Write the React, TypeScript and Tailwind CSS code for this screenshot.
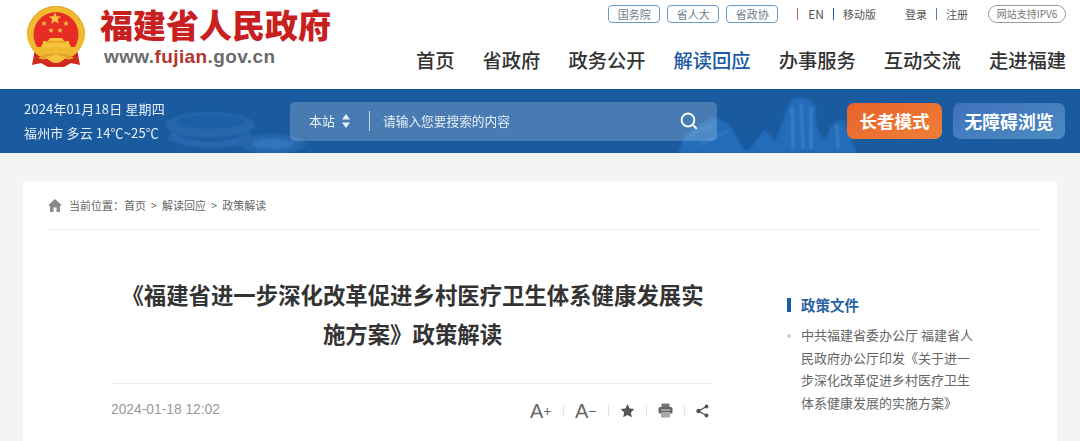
import React from "react";

function starPath(cx: number, cy: number, r: number) {
  const pts: string[] = [];
  for (let i = 0; i < 10; i++) {
    const rad = i % 2 === 0 ? r : r * 0.42;
    const a = -Math.PI / 2 + (i * Math.PI) / 5;
    pts.push(`${(cx + rad * Math.cos(a)).toFixed(2)},${(cy + rad * Math.sin(a)).toFixed(2)}`);
  }
  return `M${pts.join(" L")} Z`;
}

function Emblem() {
  return (
    <svg width="60" height="63" viewBox="0 0 60 63">
      <path d="M9 44 L6 60 L15 58 L22 62 L38 62 L45 58 L54 60 L51 44 Z" fill="#cf2a20" />
      <path d="M30 1 A29 28.5 0 0 1 59 29 C59 38 54 46 47 51 L13 51 C6 46 1 38 1 29 A29 28.5 0 0 1 30 1 Z" fill="#f0bb31" />
      <path d="M30 1.5 A28.5 28 0 0 1 58.5 29" fill="none" stroke="#e3a62a" strokeWidth="1" />
      <path d="M30 1.5 A28.5 28 0 0 0 1.5 29" fill="none" stroke="#e3a62a" strokeWidth="1" />
      <path d="M30 7 A22.5 22.5 0 0 1 52.5 29 C52.5 34 51 38 49 42 L11 42 C9 38 7.5 34 7.5 29 A22.5 22.5 0 0 1 30 7 Z" fill="#e62c24" />
      <path d="M24 33 L36 33 L38 36 L43 36 L43 38 L45 42 L15 42 L17 38 L17 36 L22 36 Z" fill="#f6c53c" />
      <path d="M19 36 H41 V37.5 H19 Z" fill="#e5a126" />
      <path d="M30 48 C24 54 18 56 12 53 L18 49 Z" fill="#e3a62a" />
      <path d="M30 48 C36 54 42 56 48 53 L42 49 Z" fill="#e3a62a" />
      <path d="M20 52 C26 60 34 60 40 52 L30 50 Z" fill="#f4c33b" />
      <path d={starPath(29, 13.5, 6.6)} fill="#f6c53c" />
      <path d={starPath(18, 18.5, 3)} fill="#f6c53c" />
      <path d={starPath(40, 18.5, 3)} fill="#f6c53c" />
      <path d={starPath(25, 25.5, 3)} fill="#f6c53c" />
      <path d={starPath(34, 25.5, 3)} fill="#f6c53c" />
    </svg>
  );
}

function Pill({ children }: { children: React.ReactNode }) {
  return (
    <span className="flex h-[18px] w-[52px] items-center justify-center rounded-[4px] border border-[#6a9bcb] text-[11px] leading-none text-[#6f7c8a]">
      {children}
    </span>
  );
}

function Sep({ className }: { className: string }) {
  return <span className={`block h-[12px] w-px ${className}`} />;
}

function Header() {
  const nav = ["首页", "省政府", "政务公开", "解读回应", "办事服务", "互动交流", "走进福建"];
  return (
    <header className="flex h-[89px] bg-white pl-[26px] pr-[14px]">
      <div className="mt-[5px]">
        <Emblem />
      </div>
      <div className="ml-[14px] mt-[9px] flex flex-col">
        <span className="whitespace-nowrap font-['Liberation_Sans','Noto_Sans_CJK_SC',sans-serif] text-[33px] font-black leading-[36px] text-[#c8201f]">福建省人民政府</span>
        <span className="ml-[4px] mt-[1px] font-['Liberation_Sans',sans-serif] text-[19px] font-bold leading-[22px] tracking-[0.4px] text-[#6b6b6b]">
          www.<span className="text-[#b5322d]">fujian</span>.gov.cn
        </span>
      </div>
      <div className="ml-auto flex flex-col items-end">
        <div className="mt-[5px] flex h-[18px] items-center">
          <div className="flex gap-[7px]">
            <Pill>国务院</Pill>
            <Pill>省人大</Pill>
            <Pill>省政协</Pill>
          </div>
          <Sep className="ml-[19px] bg-[#c0605a]" />
          <span className="ml-[10px] text-[12px] text-[#555]">EN</span>
          <Sep className="ml-[9px] bg-[#1f5ea5]" />
          <span className="ml-[9px] text-[11px] text-[#555]">移动版</span>
          <span className="ml-[29px] text-[11px] text-[#555]">登录</span>
          <Sep className="ml-[9px] bg-[#5a7fa5]" />
          <span className="ml-[9px] text-[11px] text-[#555]">注册</span>
          <span className="ml-[20px] flex h-[18px] w-[78px] items-center justify-center rounded-full border border-[#9a9a9a] text-[10px] leading-none text-[#777]">
            网站支持IPV6
          </span>
        </div>
        <nav className="mt-[23px] flex gap-[28px]">
          {nav.map((n) => (
            <span key={n} className={`text-[19.3px] font-medium leading-[28px] ${n === "解读回应" ? "text-[#1a5ba3]" : "text-[#333]"}`}>
              {n}
            </span>
          ))}
        </nav>
      </div>
    </header>
  );
}

function Scenery() {
  return (
    <svg className="absolute inset-0 h-full w-full" viewBox="0 0 1080 64" preserveAspectRatio="none">
      <defs>
        <filter id="b" x="-10%" y="-10%" width="120%" height="120%">
          <feGaussianBlur stdDeviation="0.8" />
        </filter>
      </defs>
      <g filter="url(#b)">
        <ellipse cx="210" cy="36" rx="45" ry="13" fill="#2766ab" />
        <ellipse cx="210" cy="33" rx="34" ry="7" fill="#1d5fa6" />
        <path d="M172 42 C190 56 230 56 250 42 L252 52 C230 62 190 62 168 50 Z" fill="#2a6cb3" opacity="0.8" />
        <ellipse cx="273" cy="55" rx="33" ry="10" fill="#2766ab" />
        <ellipse cx="273" cy="55" rx="21" ry="5" fill="#3175bc" />
        <path d="M678 64 L684 48 L694 38 L702 34 L712 28 L722 31 L730 36 L736 46 L742 58 L748 62 L756 52 L764 41 L770 46 L775 52 L780 40 L786 22 L790 12 L800 8 L810 11 L816 18 L816 34 L820 46 L826 50 L830 38 L836 32 L844 31 L848 40 L852 54 L858 64 Z" fill="#226fbd" opacity="0.9" />
        <path d="M792 18 L793 60 M801 14 L803 60 M811 18 L811 60 M837 36 L838 60" stroke="#4b8fd3" strokeWidth="2" opacity="0.75" fill="none" />
        <path d="M690 46 L712 36 M700 56 L728 42" stroke="#3b84cf" strokeWidth="2" opacity="0.6" />
      </g>
    </svg>
  );
}

function SearchBar() {
  return (
    <section className="relative flex h-[64px] items-center overflow-hidden bg-[#1a5a9f] pl-[24px] pr-[15px] text-white">
      <Scenery />
      <div className="relative w-[266px] text-[13px] leading-[24px] tracking-[0.15px] text-[#e8eff7]">
        <div>2024年01月18日 星期四</div>
        <div>福州市 多云 14℃~25℃</div>
      </div>
      <div className="relative flex h-[39px] w-[427px] items-center rounded-[5px] bg-[#ffffff]/20 text-[13px] text-[#e8eff7]">
        <span className="ml-[19px]">本站</span>
        <svg className="ml-[7px]" width="8" height="14" viewBox="0 0 8 14" fill="#e8eff7">
          <path d="M4 0 L8 5.5 L0 5.5 Z M4 14 L8 8.5 L0 8.5 Z" />
        </svg>
        <span className="ml-[19px] h-[20px] w-px bg-[#c5d5e6]" />
        <span className="ml-[13px] text-[12.7px]">请输入您要搜索的内容</span>
        <svg className="ml-auto mr-[19px]" width="18" height="18" viewBox="0 0 18 18" fill="none" stroke="#f2f6fa" strokeWidth="2" strokeLinecap="round">
          <circle cx="8" cy="8" r="6.4" />
          <path d="M12.8 12.8 L16.2 16.2" />
        </svg>
      </div>
      <div className="relative ml-auto flex gap-[11px]">
        <span className="flex h-[36px] w-[95px] items-center justify-center rounded-[7px] bg-gradient-to-br from-[#e8622a] to-[#ee7f38] text-[17.5px] font-bold">长者模式</span>
        <span className="flex h-[36px] w-[112px] items-center justify-center rounded-[7px] bg-gradient-to-br from-[#4170bd] to-[#4b8cc0] text-[17.8px] font-bold">无障碍浏览</span>
      </div>
    </section>
  );
}

function Tools() {
  const s = <span className="block h-[11px] w-px bg-[#e4e4e4]" />;
  return (
    <div className="flex items-center gap-[11px] text-[#666]">
      <span className="flex w-[22px] items-center font-['Liberation_Sans',sans-serif] text-[20px] leading-none">A<span className="text-[14px]">+</span></span>
      {s}
      <span className="flex w-[22px] items-center font-['Liberation_Sans',sans-serif] text-[20px] leading-none">A<span className="text-[14px]">−</span></span>
      {s}
      <svg width="15" height="15" viewBox="0 0 24 24" fill="#555"><path d="M12 1.5 L15.4 8.6 L23 9.6 L17.4 15 L18.9 22.7 L12 19 L5.1 22.7 L6.6 15 L1 9.6 L8.6 8.6 Z" /></svg>
      {s}
      <svg width="15" height="15" viewBox="0 0 15 15"><rect x="3.5" y="0.5" width="8" height="3.5" rx="0.5" fill="#777" /><rect x="0.5" y="4" width="14" height="6.5" rx="1.5" fill="#666" /><rect x="3" y="9" width="9" height="5.5" rx="0.5" fill="#aaa" /><rect x="3" y="6.5" width="9" height="1" fill="#ddd" /></svg>
      {s}
      <svg width="13" height="14" viewBox="0 0 13 14" fill="#555" stroke="#555"><path d="M10.5 2.5 L2.5 7 L10.5 11.5" fill="none" strokeWidth="1.3" /><circle cx="10.5" cy="2.5" r="1.9" stroke="none" /><circle cx="2.5" cy="7" r="2.2" stroke="none" /><circle cx="10.5" cy="11.5" r="1.9" stroke="none" /></svg>
    </div>
  );
}

function Card() {
  return (
    <main className="mx-[23px] mt-[28px] h-[260px] bg-white pl-[25px] pr-[17px]">
      <div className="flex h-[49px] items-end border-b border-[#eeeeee] pb-[14px] text-[11px] leading-[20px] text-[#666]">
        <svg className="mb-[3px]" width="14" height="13" viewBox="0 0 14 13" fill="#8a8a8a">
          <path d="M7 0 L14 6.5 L12 6.5 L12 13 L8.5 13 L8.5 8.5 L5.5 8.5 L5.5 13 L2 13 L2 6.5 L0 6.5 Z" />
        </svg>
        <span className="ml-[7px]">当前位置：</span>
        <span>首页</span>
        <span className="mx-[5px]">&gt;</span>
        <span>解读回应</span>
        <span className="mx-[5px]">&gt;</span>
        <span>政策解读</span>
      </div>
      <div className="flex">
        <article className="ml-[64px] w-[601px] shrink-0">
          <h1 className="mt-[45px] text-center text-[22.4px] font-bold leading-[39px] text-[#333]">
            《福建省进一步深化改革促进乡村医疗卫生体系健康发展实施方案》政策解读
          </h1>
          <div className="mt-[30px] flex h-[54px] items-center justify-between border-t border-[#eeeeee] pr-[4px]">
            <span className="-ml-[1px] font-['Liberation_Sans',sans-serif] text-[13.8px] text-[#999]">2024-01-18 12:02</span>
            <Tools />
          </div>
        </article>
        <aside className="ml-[74px] w-[195px] shrink-0">
          <div className="mt-[67px] flex h-[15px] items-center">
            <span className="block h-[14px] w-[4px] bg-[#1a5ba3]" />
            <span className="ml-[10px] text-[14.5px] font-bold text-[#2a63a5]">政策文件</span>
          </div>
          <div className="relative mt-[12px] pl-[14px] text-[13px] leading-[22.5px] text-[#666]">
            <span className="absolute left-[0px] top-[10px] h-[4px] w-[4px] rounded-full bg-[#ccc]" />
            中共福建省委办公厅 福建省人民政府办公厅印发《关于进一步深化改革促进乡村医疗卫生体系健康发展的实施方案》
          </div>
        </aside>
      </div>
    </main>
  );
}

export default function App() {
  return (
    <div className="h-[441px] w-[1080px] overflow-hidden bg-[#f4f4f4] font-['Noto_Sans_CJK_SC',sans-serif]">
      <Header />
      <SearchBar />
      <Card />
    </div>
  );
}
